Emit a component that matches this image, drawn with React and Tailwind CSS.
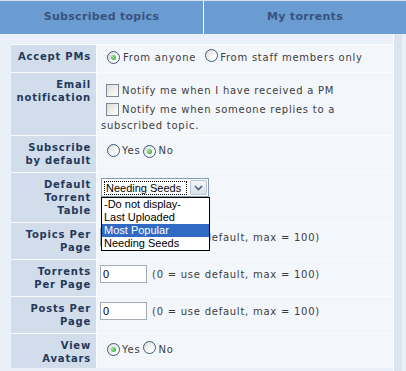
import { useState } from "react";

function Radio({ checked }) {
  return (
    <span className="relative inline-flex items-center justify-center w-[13px] h-[13px] rounded-full border border-[#3d5a7c] bg-[linear-gradient(135deg,#d8d8d2,#ffffff_70%)] shrink-0">
      {checked && (
        <span className="w-[5px] h-[5px] rounded-full bg-[radial-gradient(circle_at_35%_35%,#9be89b,#1f9b1f)]" />
      )}
    </span>
  );
}

function Checkbox() {
  return (
    <span className="inline-block w-[13px] h-[13px] border border-[#7c8896] bg-[linear-gradient(135deg,#dcdcd6,#f7f7f4_75%)] shrink-0" />
  );
}

function Label({ children }) {
  return (
    <div className="w-[85px] shrink-0 bg-[#d1ddeb] text-right pr-[5px] pt-[5px] font-bold text-[10px] leading-[13px] tracking-[0.8px] text-[#24395a] whitespace-nowrap">
      {children}
    </div>
  );
}

function NumberInput() {
  return (
    <div className="flex items-center gap-[5px] pt-[5px]">
      <input
        defaultValue="0"
        className="w-[47px] h-[18px] border border-[#a3abb5] bg-white px-[2px] text-[11px] tracking-normal font-['Liberation_Sans',sans-serif] text-black outline-none"
      />
      <span>(0 = use default, max = 100)</span>
    </div>
  );
}

const options = ["-Do not display-", "Last Uploaded", "Most Popular", "Needing Seeds"];

export default function App() {
  const [hover] = useState("Most Popular");

  return (
    <div className="w-[406px] h-[371px] overflow-hidden bg-[#e9f0f8] font-['DejaVu_Sans',Verdana,sans-serif] text-[10px] tracking-[0.75px] text-[#3d3d3d]">
      {/* tabs */}
      <div className="flex h-[34px] border-t border-[#d5e1ee] bg-white gap-px">
        <div className="w-[203px] bg-[#6a9bd1] flex items-center justify-center font-bold text-[11px] tracking-[0.3px] text-[#38537f]">
          Subscribed topics
        </div>
        <div className="flex-1 bg-[#6a9bd1] flex items-center justify-center font-bold text-[11px] tracking-[0.3px] text-[#38537f]">
          My torrents
        </div>
      </div>

      <div className="flex h-[337px]">
        <div className="flex-1 pl-[11px] pt-[10px]">
          <div className="flex flex-col gap-px bg-[#f9fbfd] pt-px">

            {/* Accept PMs */}
            <div className="flex h-[27px] gap-px">
              <Label>Accept PMs</Label>
              <div className="flex-1 bg-[#f3f6fa] pl-[10px] pt-[3px] whitespace-nowrap">
                <div className="flex items-center h-[19px]">
                  <Radio checked />
                  <span className="ml-[3px]">From anyone</span>
                  <span className="ml-[9px]"><Radio /></span>
                  <span className="ml-[2px]">From staff members only</span>
                </div>
              </div>
            </div>

            {/* Email */}
            <div className="flex h-[62px] gap-px">
              <Label>Email<br />notification</Label>
              <div className="flex-1 bg-[#f3f6fa] pl-[4px] pt-[8px] whitespace-nowrap">
                <div className="flex items-center h-[19px] pl-[5px]">
                  <Checkbox />
                  <span className="ml-[3px]">Notify me when I have received a PM</span>
                </div>
                <div className="flex items-center h-[19px] pl-[5px]">
                  <Checkbox />
                  <span className="ml-[3px]">Notify me when someone replies to a</span>
                </div>
                <div className="h-[13px] leading-[13px]">subscribed topic.</div>
              </div>
            </div>

            {/* Subscribe by default */}
            <div className="flex h-[36px] gap-px">
              <Label>Subscribe<br />by default</Label>
              <div className="flex-1 bg-[#f3f6fa] pl-[10px] pt-[5px]">
                <div className="flex items-center h-[19px]">
                  <Radio />
                  <span className="ml-[2px]">Yes</span>
                  <span className="ml-[3px]"><Radio checked /></span>
                  <span className="ml-[2px]">No</span>
                </div>
              </div>
            </div>

            {/* Default Torrent Table */}
            <div className="flex h-[49px] gap-px">
              <Label>Default<br />Torrent<br />Table</Label>
              <div className="relative flex-1 bg-[#f3f6fa] pl-[4px] pt-[5px]">
                <div className="flex items-center w-[108px] h-[19px] border border-[#7f9db9] bg-white font-['Liberation_Sans',sans-serif] text-[11px] tracking-normal text-black">
                  <span className="ml-[2px] h-[14px] w-[83px] border border-dotted border-black leading-[12px] pl-px">
                    Needing Seeds
                  </span>
                  <span className="ml-auto mr-px flex items-center justify-center w-[17px] h-[15px] rounded-[2px] border border-[#b7c3d3] bg-[linear-gradient(#f4f6fa,#d9e0ea)]">
                    <svg width="9" height="6" viewBox="0 0 9 6">
                      <path d="M1 1 L4.5 4.5 L8 1" fill="none" stroke="#4d6185" strokeWidth="1.6" />
                    </svg>
                  </span>
                </div>

                {/* open list */}
                <div className="absolute left-[4px] top-[24px] z-10 w-[109px] border border-black bg-white font-['Liberation_Sans',sans-serif] text-[11px] tracking-normal text-black">
                  {options.map((o) => (
                    <div
                      key={o}
                      className={
                        o === hover
                          ? "h-[13px] leading-[13px] pl-[2px] bg-[#316ac5] text-white"
                          : "h-[13px] leading-[13px] pl-[2px]"
                      }
                    >
                      {o}
                    </div>
                  ))}
                </div>
              </div>
            </div>

            {/* Topics Per Page */}
            <div className="flex h-[36px] gap-px">
              <Label>Topics Per<br />Page</Label>
              <div className="flex-1 bg-[#f3f6fa] pl-[3px] whitespace-nowrap">
                <NumberInput />
              </div>
            </div>

            {/* Torrents Per Page */}
            <div className="flex h-[36px] gap-px">
              <Label>Torrents<br />Per Page</Label>
              <div className="flex-1 bg-[#f3f6fa] pl-[3px] whitespace-nowrap">
                <NumberInput />
              </div>
            </div>

            {/* Posts Per Page */}
            <div className="flex h-[36px] gap-px">
              <Label>Posts Per<br />Page</Label>
              <div className="flex-1 bg-[#f3f6fa] pl-[3px] whitespace-nowrap">
                <NumberInput />
              </div>
            </div>

            {/* View Avatars */}
            <div className="flex h-[34px] gap-px">
              <Label>View<br />Avatars</Label>
              <div className="flex-1 bg-[#f3f6fa] pl-[10px] pt-[6px]">
                <div className="flex items-center h-[19px]">
                  <Radio checked />
                  <span className="ml-[2px]">Yes</span>
                  <span className="ml-[3px]"><Radio /></span>
                  <span className="ml-[2px]">No</span>
                </div>
              </div>
            </div>

          </div>
        </div>
        <div className="w-px bg-[#fbfcfe]" />
        <div className="w-[8px] bg-[#dce5ef]" />
        <div className="w-[4px]" />
      </div>
    </div>
  );
}
